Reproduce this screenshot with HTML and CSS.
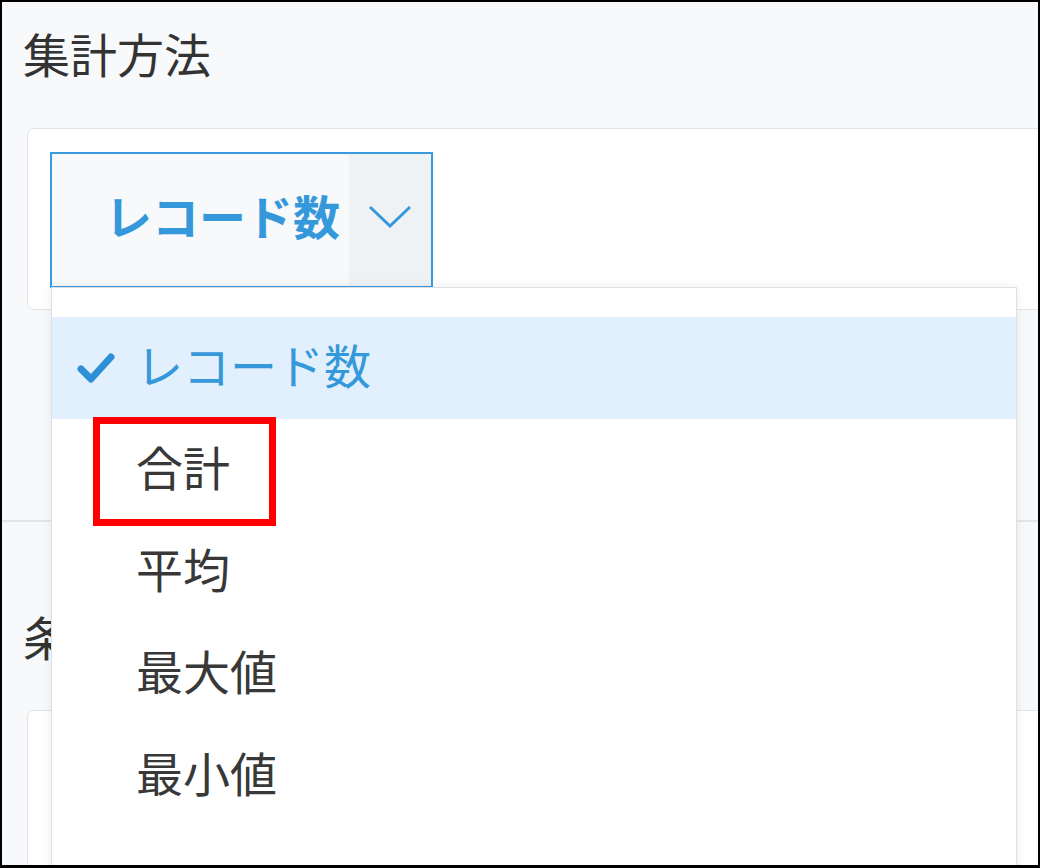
FILE: index.html
```html
<!DOCTYPE html>
<html lang="ja">
<head>
<meta charset="utf-8">
<title>集計方法</title>
<link rel="stylesheet" href="styles.css">
</head>
<body>
<div class="frame">
  <section class="section first">
    <h2 class="title">集計方法</h2>
    <div class="panel">
      <div class="select">
        <span class="select-label">レコード数</span>
        <span class="select-arrow">
          <svg width="44" height="24" viewBox="0 0 44 24"><polyline points="2,2 22,21 42,2" fill="none" stroke="#3498db" stroke-width="3"/></svg>
        </span>
      </div>
    </div>
  </section>
  <section class="section second">
    <h2 class="title">条件</h2>
    <div class="panel panel-tall"></div>
  </section>

  <ul class="menu">
    <li class="menu-item selected">
      <svg class="check" width="40" height="32" viewBox="0 0 40 32"><polyline points="5,17 15,27 35,5" fill="none" stroke="#2d8fd6" stroke-width="7" stroke-linecap="round" stroke-linejoin="round"/></svg>
      <span>レコード数</span>
    </li>
    <li class="menu-item"><span>合計</span></li>
    <li class="menu-item"><span>平均</span></li>
    <li class="menu-item"><span>最大値</span></li>
    <li class="menu-item"><span>最小値</span></li>
  </ul>

  <div class="highlight"></div>
</div>
</body>
</html>
```

FILE: styles.css
```css
* { box-sizing: border-box; }
html, body { margin: 0; padding: 0; }
body {
  font-family: "Noto Sans CJK JP", "Noto Sans", sans-serif;
  background: #ffffff;
}
.frame {
  position: relative;
  width: 1040px;
  height: 868px;
  border: 2px solid #000;
  border-bottom-width: 3px;
  background: #f7f9fa;
  overflow: hidden;
}
.section {
  padding-left: 21px;
}
.section.first {
  height: 520px;
  padding-top: 27px;
  border-bottom: 2px solid #e2e6e8;
}
.section.second {
  padding-top: 90px;
}
.title {
  margin: 0;
  font-size: 47px;
  line-height: 47px;
  font-weight: 400;
  color: #333;
}
.panel {
  margin-top: 52px;
  margin-left: 4px;
  margin-right: -30px;
  background: #fff;
  border: 1px solid #e1e5e7;
  border-radius: 7px;
  padding: 23px 22px 21px;
}
.second .panel { margin-top: 51px; height: 300px; }
.select {
  display: flex;
  width: 383px;
  height: 136px;
  border: 2px solid #3a9ae0;
  background: #f7f9fa;
}
.select-label {
  flex: 1;
  display: flex;
  align-items: center;
  padding-left: 53px;
  padding-bottom: 12px;
  font-size: 47px;
  font-weight: 700;
  color: #3498db;
}
.select-arrow {
  width: 82px;
  background: #eef2f5;
  display: flex;
  align-items: center;
  justify-content: center;
  padding-bottom: 6px;
}
.menu {
  position: absolute;
  left: 49px;
  top: 285px;
  width: 966px;
  height: 620px;
  margin: 0;
  padding: 29px 0 0;
  list-style: none;
  background: #fff;
  border: 1px solid #dde1e4;
  box-shadow: 0 0 10px rgba(0, 0, 0, 0.08);
}
.menu-item {
  position: relative;
  display: flex;
  align-items: center;
  height: 102px;
  padding-left: 84px;
  padding-bottom: 9px;
  font-size: 47px;
  color: #383838;
}
.menu-item.selected {
  background: #e1f0fc;
  color: #3498db;
}
.check {
  position: absolute;
  left: 24px;
  top: 35px;
}
.highlight {
  position: absolute;
  left: 91px;
  top: 415px;
  width: 183px;
  height: 109px;
  border: 7px solid #f00;
}
```
